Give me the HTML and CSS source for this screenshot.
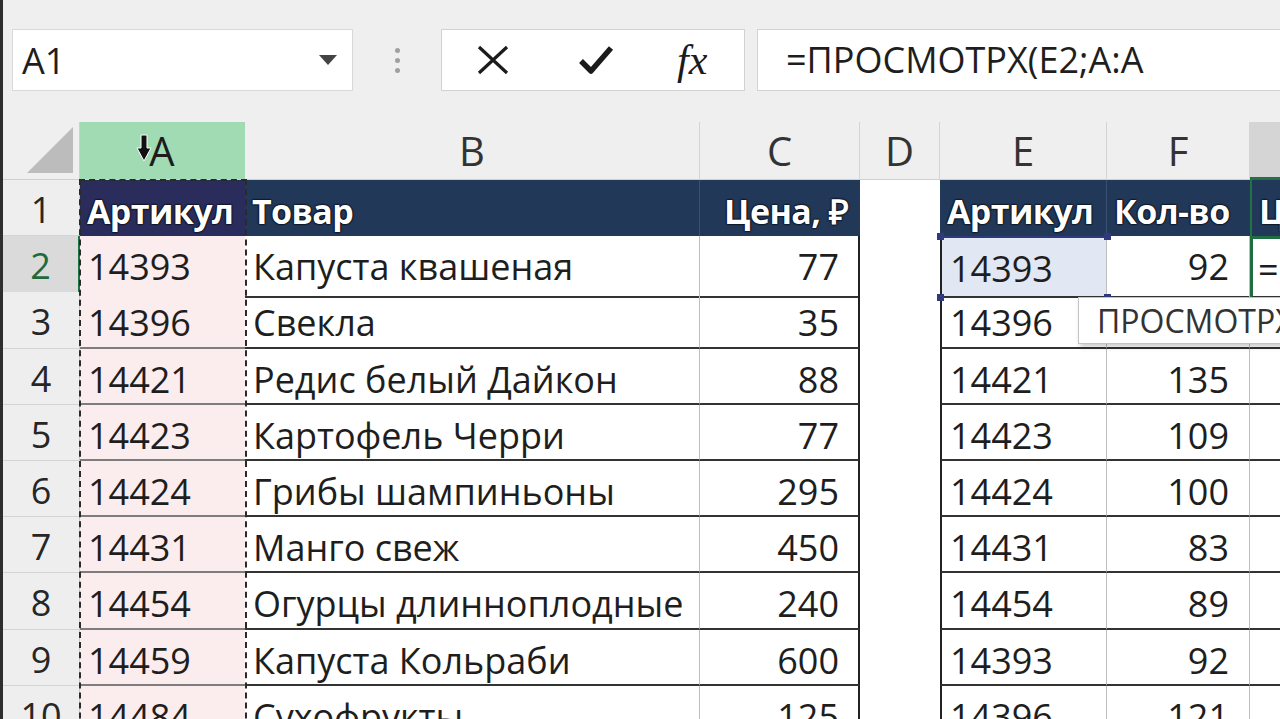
FILE: index.html
```html
<!DOCTYPE html>
<html lang="ru">
<head>
    <meta charset="UTF-8">
    <title>ПРОСМОТРХ</title>
    <link rel="stylesheet" href="styles.css">
</head>
<body>
<div class="frame">
    <div class="formula-bar">
        <div class="name-box">
            <span>A1</span>
            <svg class="caret" width="18" height="10" viewBox="0 0 18 10"><path d="M0 0H18L9 10Z" fill="#444"/></svg>
        </div>
        <div class="grip"><i></i><i></i><i></i></div>
        <div class="fx-buttons">
            <svg class="btn-cancel" width="34" height="30" viewBox="0 0 34 30"><path d="M3 2L31 28M31 2L3 28" stroke="#1b1b1b" stroke-width="3.2" fill="none"/></svg>
            <svg class="btn-enter" width="36" height="32" viewBox="0 0 36 32"><path d="M3 17L13 27L33 4" stroke="#1b1b1b" stroke-width="5.5" fill="none" stroke-linejoin="round"/></svg>
            <span class="fx">fx</span>
        </div>
        <div class="formula">=ПРОСМОТРХ(E2;A:A</div>
    </div>

    <div class="sheet">
        <div class="row col-heads">
            <div class="corner"><svg width="46" height="46" viewBox="0 0 46 46"><path d="M0 46H46V0Z" fill="#bcbcbc"/></svg></div>
            <div class="col-head picked">
                <svg class="cursor" width="16" height="28" viewBox="0 0 16 28"><path d="M5 1H11V14H15L8 27L1 14H5Z" fill="#111" stroke="#fff" stroke-width="1"/></svg>
                A
            </div>
            <div class="col-head">B</div>
            <div class="col-head">C</div>
            <div class="col-head">D</div>
            <div class="col-head">E</div>
            <div class="col-head">F</div>
            <div class="col-head current"></div>
        </div>

        <div class="row table-head">
            <div class="rh">1</div>
            <div class="th">Артикул</div>
            <div class="th">Товар</div>
            <div class="th">Цена, ₽</div>
            <div></div>
            <div class="th">Артикул</div>
            <div class="th">Кол-во</div>
            <div class="th">Цена, ₽</div>
        </div>

        <div class="row data">
            <div class="rh active-row">2</div>
            <div>14393</div><div>Капуста квашеная</div><div>77</div><div></div>
            <div class="ref">14393<span class="h tl"></span><span class="h tr"></span><span class="h bl"></span><span class="h br"></span></div>
            <div>92</div>
            <div class="editing">=ПРОСМОТРХ(E2;A:A</div>
        </div>
        <div class="row data">
            <div class="rh">3</div>
            <div>14396</div><div>Свекла</div><div>35</div><div></div>
            <div>14396</div><div></div><div></div>
        </div>
        <div class="row data">
            <div class="rh">4</div>
            <div>14421</div><div>Редис белый Дайкон</div><div>88</div><div></div>
            <div>14421</div><div>135</div><div></div>
        </div>
        <div class="row data">
            <div class="rh">5</div>
            <div>14423</div><div>Картофель Черри</div><div>77</div><div></div>
            <div>14423</div><div>109</div><div></div>
        </div>
        <div class="row data">
            <div class="rh">6</div>
            <div>14424</div><div>Грибы шампиньоны</div><div>295</div><div></div>
            <div>14424</div><div>100</div><div></div>
        </div>
        <div class="row data">
            <div class="rh">7</div>
            <div>14431</div><div>Манго свеж</div><div>450</div><div></div>
            <div>14431</div><div>83</div><div></div>
        </div>
        <div class="row data">
            <div class="rh">8</div>
            <div>14454</div><div>Огурцы длинноплодные</div><div>240</div><div></div>
            <div>14454</div><div>89</div><div></div>
        </div>
        <div class="row data">
            <div class="rh">9</div>
            <div>14459</div><div>Капуста Кольраби</div><div>600</div><div></div>
            <div>14393</div><div>92</div><div></div>
        </div>
        <div class="row data">
            <div class="rh">10</div>
            <div>14484</div><div>Сухофрукты</div><div>125</div><div></div>
            <div>14396</div><div>121</div><div></div>
        </div>

        <!-- copy marquee around column A -->
        <div class="ants"></div>
        <div class="tooltip">ПРОСМОТРХ</div>
    </div>
</div>
</body>
</html>
```

FILE: styles.css
```css
* { box-sizing: border-box; }
body { margin: 0; width: 1280px; height: 719px; overflow: hidden; background: #fff; color: #1e1e1e; font-family: "Open Sans", sans-serif; }
.frame { height: 719px; border-left: 3px solid #2e2e2e; }

/* formula bar */
.formula-bar { height: 122px; background: #efefef; display: flex; align-items: flex-start; padding: 29px 0 0 9px; }
.name-box { width: 341px; height: 62px; background: #fff; border: 1px solid #d8d8d8; display: flex; align-items: center; justify-content: space-between; padding: 0 15px 0 9px; font-size: 36px; }
.grip { width: 88px; height: 62px; display: flex; flex-direction: column; align-items: center; justify-content: center; gap: 5px; }
.grip i { width: 5px; height: 5px; border-radius: 50%; background: #a0a0a0; }
.fx-buttons { width: 304px; height: 62px; background: #fff; border: 1px solid #d2d2d2; display: flex; align-items: center; padding-left: 34px; }
.btn-enter { margin-left: 68px; }
.fx { margin-left: 63px; font-family: "Liberation Serif", serif; font-style: italic; font-size: 42px; line-height: 1; color: #1b1b1b; }
.formula { flex: 1; margin-left: 12px; height: 62px; background: #fff; border: 1px solid #d2d2d2; border-right: none; padding-left: 28px; font-size: 36px; line-height: 60px; white-space: nowrap; }

/* sheet grid */
.sheet { position: relative; }
.row { display: grid; grid-template-columns: 77px 165px 455px 160px 80px 167px 143px 200px; height: 56.2px; }
.row > div { white-space: nowrap; overflow: hidden; }

.col-heads { height: 58px; background: #efefef; }
.corner { display: flex; align-items: flex-end; justify-content: flex-end; padding: 0 6px 6px 0; border-right: 1px solid #cfcfcf; border-bottom: 1px solid #cfcfcf; }
.col-head { position: relative; text-align: center; font-size: 40px; line-height: 58px; color: #333; border-right: 1px solid #d4d4d4; border-bottom: 1px solid #cfcfcf; }
.col-head.picked { background: #a0dbb4; color: #1c1c1c; border-right-color: #a0dbb4; }
.col-head.current { background: #d5d5d5; border-bottom: 3px solid #217346; }
.cursor { position: absolute; left: 56px; top: 12px; }

.rh { background: #eeeeee; border-right: 1px solid #c9c9c9; border-bottom: 1px solid #d4d4d4; text-align: center; font-size: 36px; line-height: 54px; padding-top: 3px; color: #262626; }
.rh.active-row { background: #dadada; color: #1d6a3e; border-right: 2px solid #217346; }

/* table header band */
.table-head > div:nth-child(n+2) { background: #213859; }
.table-head > div:nth-child(5) { background: #fff; }
.table-head > div:nth-child(2) { background: #2a2d5c; }
.table-head > div:nth-child(3) { border-right: 1px solid #3b5070; }
.table-head > div:nth-child(6) { border-right: 1px solid #3b5070; }
.table-head > div:nth-child(8) { border-left: 2px solid #217346; }
.th { font-weight: 700; font-size: 34px; line-height: 54px; padding-top: 4px; letter-spacing: -0.6px; color: #fff; padding-left: 7px; text-shadow: 0 0 2px #000, 0 0 2px #000, 0 0 1px #000; }
.table-head > .th:nth-child(4) { text-align: right; padding-right: 12px; }

/* body cells */
.data > div:nth-child(n+2) { font-size: 36px; line-height: 54px; padding: 4px 0 0 8px; border-bottom: 2px solid #333; }
.data > div:nth-child(2) { background: #fbecee; border-bottom-color: #7d7d7d; }
.data > div:nth-child(3) { border-right: 1px solid #bdbdbd; }
.data > div:nth-child(4) { text-align: right; padding-right: 19px; border-right: 2px solid #222; }
.data > div:nth-child(5) { border-bottom: none; }
.data > div:nth-child(6) { padding-left: 8px; border-left: 2px solid #222; border-right: 1px solid #bdbdbd; }
.data > div:nth-child(7) { text-align: right; padding-right: 20px; border-right: 1px solid #bdbdbd; }
.data > div:nth-child(8) { padding-left: 5px; }

.data > .ref { position: relative; overflow: visible; background: #e1e8f4; border: 2px solid #2e3a7c; padding-top: 2px; }
.h { position: absolute; width: 7px; height: 7px; background: #2e3a7c; }
.h.tl { left: -5px; top: -5px; }
.h.tr { right: -5px; top: -5px; }
.h.bl { left: -5px; bottom: -5px; }
.h.br { right: -5px; bottom: -5px; }
.data > .editing { border: 3px solid #1e6e42; padding: 1px 0 0 4px; }

.ants { position: absolute; left: 76px; top: 57px; width: 168px; height: 600px; border: 2px dashed #2a2a2a; }
.tooltip { position: absolute; left: 1075px; top: 175px; height: 47px; padding: 0 40px 0 18px; background: #fff; border: 1px solid #c4c4c4; box-shadow: 2px 3px 5px rgba(0, 0, 0, 0.2); font-size: 32px; line-height: 45px; color: #333; white-space: nowrap; }
```
